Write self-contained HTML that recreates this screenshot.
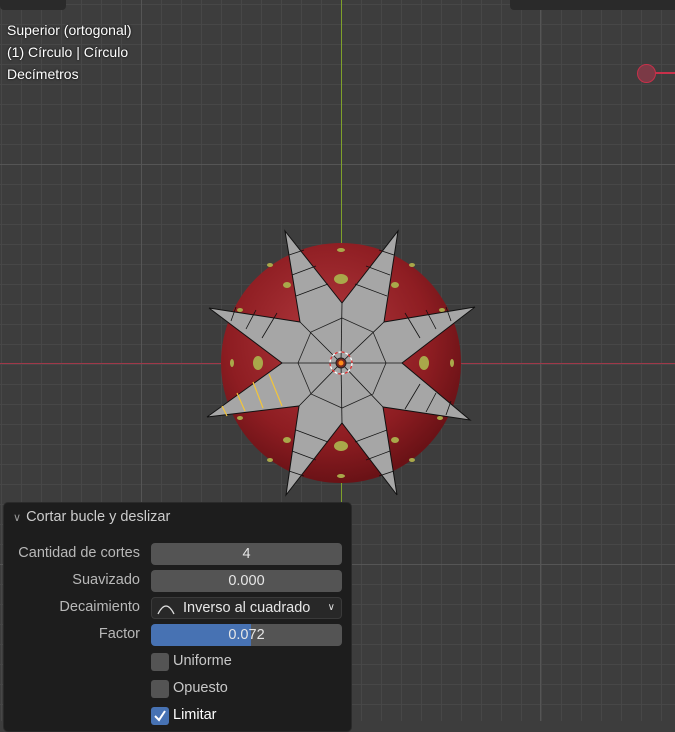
<!DOCTYPE html>
<html><head><meta charset="utf-8"><style>
*{margin:0;padding:0;box-sizing:border-box}
body{width:675px;height:721px;overflow:hidden;background:#3d3d3d;position:relative;font-family:"Liberation Sans","DejaVu Sans",sans-serif}
.grid{position:absolute;inset:0;background-image:
linear-gradient(to right,#474747 0 1px,transparent 1px),
linear-gradient(to bottom,#474747 0 1px,transparent 1px);
background-size:20px 20px,20px 20px;background-position:1px 0,0 4px}
.ov{position:absolute;left:7px;color:#fff;font-size:14px;text-shadow:0 0 2px #000}
.panel{position:absolute;left:3px;top:502px;width:349px;height:230px;background:#1d1d1d;border-radius:5px;border:1px solid #2a2a2a}
.lbl{position:absolute;right:211px;color:#b8b8b8;font-size:14.5px;text-align:right}
.fld{position:absolute;left:147px;width:191px;height:22px;background:#545454;border-radius:4px;color:#e6e6e6;font-size:14.5px;text-align:center;line-height:22px}
.cb{position:absolute;left:147px;width:18px;height:18px;background:#545454;border-radius:3px}
.cl{position:absolute;left:169px;color:#c8c8c8;font-size:14.5px}
</style></head><body>
<div class="grid"></div>
<div style="position:absolute;left:0;top:164px;width:675px;height:1px;background:#555"></div>
<div style="position:absolute;left:0;top:564px;width:675px;height:1px;background:#555"></div>
<div style="position:absolute;left:141px;top:0;width:1px;height:721px;background:#555"></div>
<div style="position:absolute;left:540px;top:0;width:1px;height:721px;background:#555"></div>
<div style="position:absolute;left:0;top:363px;width:675px;height:1px;background:#a03849"></div>
<div style="position:absolute;left:341px;top:0;width:1px;height:721px;background:#7fa02a"></div>
<div style="position:absolute;left:0;top:-6px;width:66px;height:16px;background:#2a2a2a;border-radius:4px"></div>
<div style="position:absolute;left:510px;top:-6px;width:170px;height:16px;background:#2a2a2a;border-radius:4px"></div>
<div class="ov" style="top:22px">Superior (ortogonal)</div>
<div class="ov" style="top:44px">(1) Círculo | Círculo</div>
<div class="ov" style="top:66px">Decímetros</div>
<div style="position:absolute;left:654px;top:72px;width:21px;height:2px;background:#c8304a"></div>
<div style="position:absolute;left:637px;top:64px;width:19px;height:19px;border-radius:50%;background:#7b3a46;border:1.5px solid #c8304a"></div>
<svg width="675" height="721" style="position:absolute;left:0;top:0">
<defs><radialGradient id="g" cx="0.45" cy="0.4" r="0.6"><stop offset="0" stop-color="#b23a3f"/><stop offset="0.7" stop-color="#8e1d22"/><stop offset="1" stop-color="#6a1216"/></radialGradient></defs>
<circle cx="341" cy="363" r="120" fill="url(#g)"/>
<g fill="#a9a84a">
<ellipse cx="341" cy="279" rx="7" ry="5"/><ellipse cx="341" cy="446" rx="7" ry="5"/>
<ellipse cx="258" cy="363" rx="5" ry="7"/><ellipse cx="424" cy="363" rx="5" ry="7"/>
<ellipse cx="287" cy="285" rx="4" ry="3"/><ellipse cx="395" cy="285" rx="4" ry="3"/>
<ellipse cx="287" cy="440" rx="4" ry="3"/><ellipse cx="395" cy="440" rx="4" ry="3"/>
<ellipse cx="232" cy="363" rx="2" ry="4"/><ellipse cx="452" cy="363" rx="2" ry="4"/>
<ellipse cx="341" cy="250" rx="4" ry="2"/><ellipse cx="341" cy="476" rx="4" ry="2"/>
<ellipse cx="270" cy="265" rx="3" ry="2"/><ellipse cx="412" cy="265" rx="3" ry="2"/>
<ellipse cx="270" cy="460" rx="3" ry="2"/><ellipse cx="412" cy="460" rx="3" ry="2"/>
<ellipse cx="442" cy="310" rx="3" ry="2"/><ellipse cx="440" cy="418" rx="3" ry="2"/>
<ellipse cx="240" cy="310" rx="3" ry="2"/><ellipse cx="240" cy="418" rx="3" ry="2"/>
</g>
<polygon points="285,231 342,303 398,231 384,322 475,307 402,363 470,420 383,407 397,495 342,423 286,495 299,406 207,417 282,363 209,308 300,322" fill="#a6a6a6" stroke="#111" stroke-width="1"/>
<polygon points="342,318 373,332 386,363 373,394 342,408 311,394 298,363 311,332" fill="none" stroke="#222" stroke-width="0.8"/>
<g stroke="#111" stroke-width="0.8">
<line x1="341" y1="363" x2="342" y2="303"/><line x1="341" y1="363" x2="384" y2="322"/>
<line x1="341" y1="363" x2="402" y2="363"/><line x1="341" y1="363" x2="383" y2="407"/>
<line x1="341" y1="363" x2="342" y2="423"/><line x1="341" y1="363" x2="299" y2="406"/>
<line x1="341" y1="363" x2="282" y2="363"/><line x1="341" y1="363" x2="300" y2="322"/>
<line x1="289" y1="255" x2="304" y2="250"/><line x1="292" y1="275" x2="316" y2="266"/><line x1="296" y1="296" x2="328" y2="284"/>
<line x1="394" y1="255" x2="379" y2="250"/><line x1="390" y1="275" x2="366" y2="266"/><line x1="387" y1="296" x2="355" y2="284"/>
<line x1="236" y1="307" x2="231" y2="321"/><line x1="256" y1="310" x2="246" y2="329"/><line x1="277" y1="313" x2="262" y2="338"/>
<line x1="446" y1="307" x2="451" y2="321"/><line x1="426" y1="310" x2="436" y2="329"/><line x1="405" y1="313" x2="420" y2="338"/>
<line x1="289" y1="471" x2="304" y2="476"/><line x1="292" y1="451" x2="316" y2="460"/><line x1="296" y1="430" x2="328" y2="442"/>
<line x1="394" y1="471" x2="379" y2="476"/><line x1="390" y1="451" x2="366" y2="460"/><line x1="387" y1="430" x2="355" y2="442"/>
<line x1="446" y1="415" x2="451" y2="401"/><line x1="426" y1="412" x2="436" y2="393"/><line x1="405" y1="409" x2="420" y2="384"/>
</g>
<g stroke="#f2c53a" stroke-width="1.2">
<line x1="222" y1="406" x2="227" y2="416"/><line x1="237" y1="393" x2="245" y2="411"/><line x1="253" y1="382" x2="263" y2="408"/><line x1="269" y1="374" x2="282" y2="406"/>
</g>
<circle cx="341" cy="363" r="11" fill="none" stroke="#fff" stroke-width="1.3" stroke-dasharray="4 3"/>
<circle cx="341" cy="363" r="11" fill="none" stroke="#e03030" stroke-width="1.3" stroke-dasharray="3 4" stroke-dashoffset="4"/>
<circle cx="341" cy="363" r="5" fill="#7a2a20" stroke="#222"/>
<circle cx="341" cy="363" r="2.5" fill="#ff8c1a"/>
</svg>
<div class="panel">
<div style="position:absolute;left:9px;top:6px;color:#ccc;font-size:14.5px"><span style="font-size:11px;color:#999;margin-right:5px">&#8744;</span>Cortar bucle y deslizar</div>
<div class="lbl" style="top:42px">Cantidad de cortes</div><div class="fld" style="top:40px">4</div>
<div class="lbl" style="top:69px">Suavizado</div><div class="fld" style="top:67px">0.000</div>
<div class="lbl" style="top:96px">Decaimiento</div><div class="fld" style="top:94px;background:#282828;border:1px solid #3a3a3a;text-align:left;padding-left:31px;line-height:20px">Inverso al cuadrado<span style="position:absolute;right:6px;font-size:10px;color:#ddd">&#8744;</span>
<svg style="position:absolute;left:5px;top:3px" width="18" height="14"><path d="M1 13 Q9 -3 17 13" fill="none" stroke="#ddd" stroke-width="1.3"/></svg></div>
<div class="lbl" style="top:123px">Factor</div><div class="fld" style="top:121px;background:linear-gradient(to right,#4772b3 0 100px,#545454 100px)">0.072</div>
<div class="cb" style="top:150px"></div><div class="cl" style="top:150px">Uniforme</div>
<div class="cb" style="top:177px"></div><div class="cl" style="top:177px">Opuesto</div>
<div class="cb" style="top:204px;background:#4772b3"><svg width="18" height="18"><path d="M4 9 L8 13 L14 4" fill="none" stroke="#fff" stroke-width="2"/></svg></div><div class="cl" style="top:204px;color:#fff">Limitar</div>
</div>
</body></html>
